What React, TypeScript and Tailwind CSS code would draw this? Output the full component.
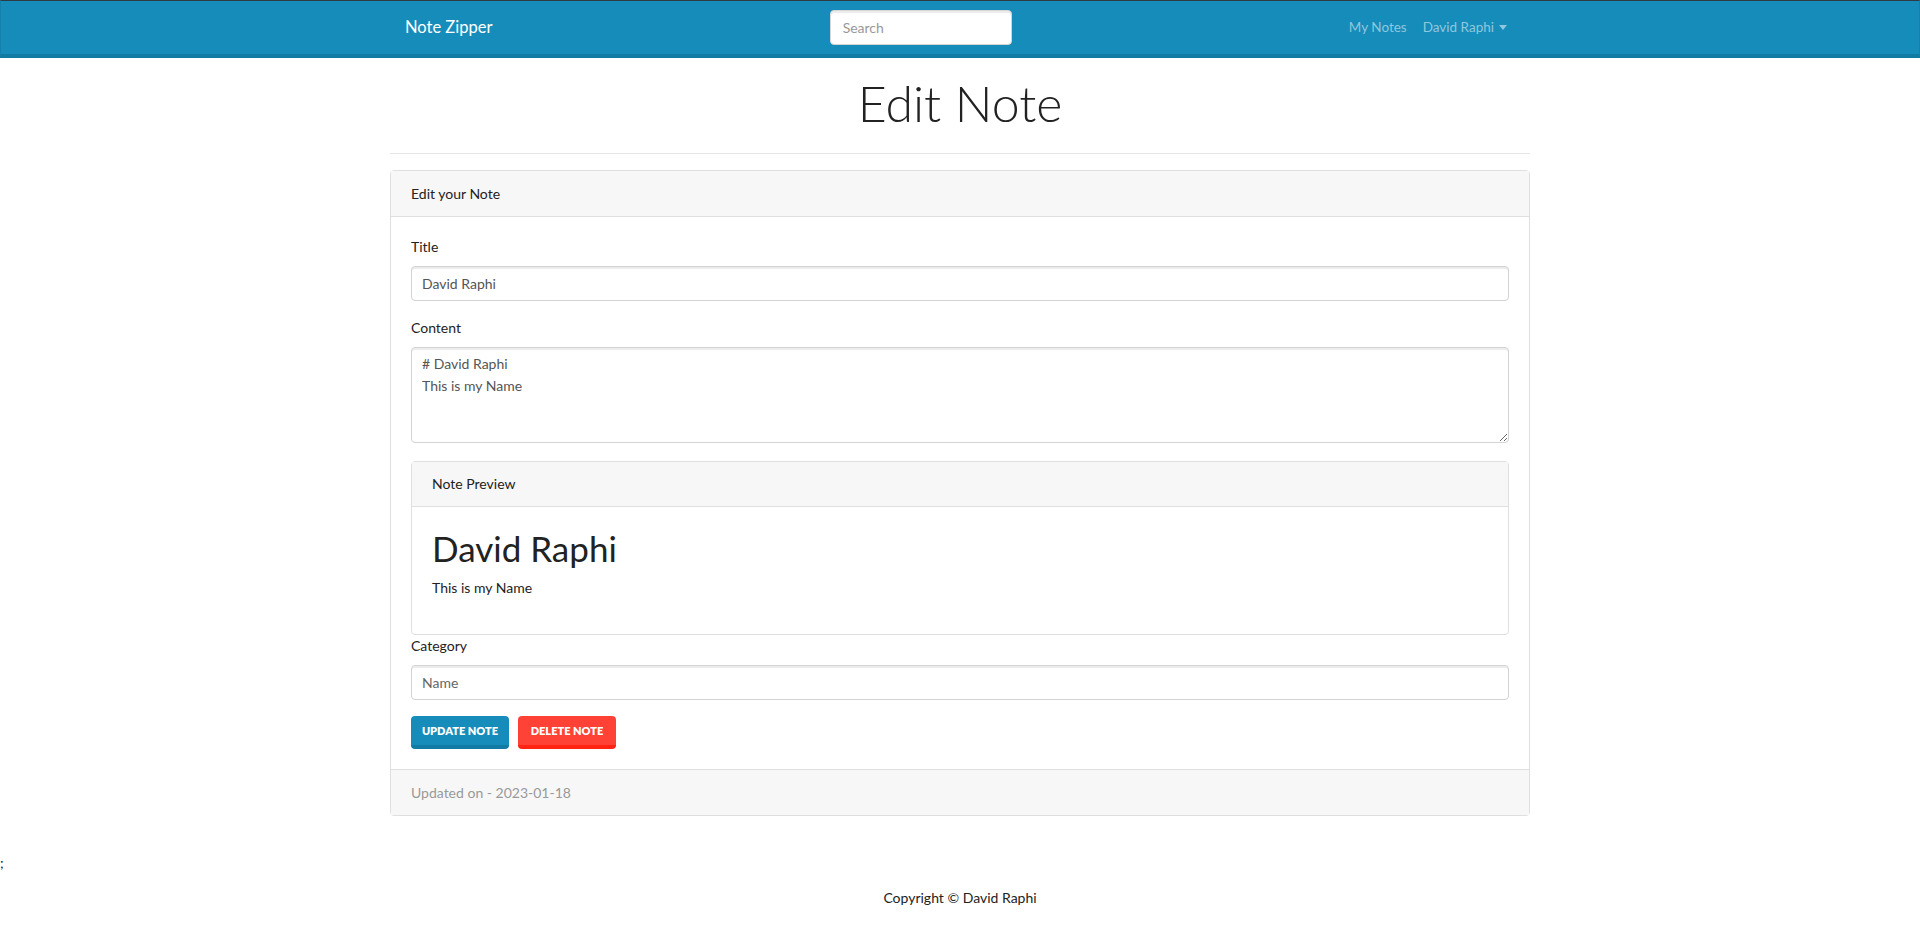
import React from "react";

const Header = () => {
  return (
    <nav className="h-[58px] border-t border-l border-r border-b-4 border-t-[#2f3a44] border-l-[#1581ab] border-r-[#1581ab] border-b-[#127ba3] bg-[#168cba]">
      <div className="mx-auto flex h-full w-[1140px] items-center px-[15px]">
        <a className="text-[16.5px] text-white" href="#">
          Note Zipper
        </a>
        <div className="flex flex-1 justify-center pl-[8px]">
          <input
            type="text"
            placeholder="Search"
            className="h-[35px] w-[182px] rounded-[4px] border border-[#d5d5d5] bg-white px-3 text-[14px] text-[#555] shadow-[inset_0_2px_0_rgba(0,0,0,0.075)] placeholder:text-[#999] focus:outline-none"
          />
        </div>
        <div className="flex items-center text-[13.5px] text-[#8fc7dd]">
          <a href="#" className="px-2">
            My Notes
          </a>
          <a href="#" className="flex items-center gap-[5px] px-2">
            David Raphi
            <span className="h-0 w-0 border-x-[4px] border-t-[5px] border-x-transparent border-t-[#8fc7dd]" />
          </a>
        </div>
      </div>
    </nav>
  );
};

const inputCls =
  "block h-[35px] w-full rounded-[4px] border border-[#d3d3d3] bg-white px-[10px] text-[14px] text-[#555] shadow-[inset_0_2px_0_rgba(0,0,0,0.075)] focus:outline-none";

const EditNote = () => {
  return (
    <div className="mx-auto w-[1140px]">
      <h1 className="mt-[14px] text-center text-[50px] font-light leading-[62px] text-[#222]">
        Edit Note
      </h1>
      <hr className="mt-[19px] border-t border-[#e6e6e6]" />

      <div className="mt-[16px] rounded-[4px] border border-[#dfdfdf]">
        <div className="h-[46px] border-b border-[#dfdfdf] bg-[#f7f7f7] px-5 py-3 leading-[21px]">
          Edit your Note
        </div>

        <div className="p-5 pt-[19px]">
          <div className="mb-4">
            <label className="mb-[9px] block leading-[21px]">Title</label>
            <input type="text" defaultValue="David Raphi" className={inputCls} />
          </div>

          <div className="mb-[18px]">
            <label className="mb-[9px] block leading-[21px]">Content</label>
            <textarea
              rows={4}
              defaultValue={"# David Raphi\nThis is my Name"}
              className="block h-[96px] w-full rounded-[4px] border border-[#d3d3d3] bg-white px-[10px] py-[5px] text-[14px] leading-[22px] text-[#555] shadow-[inset_0_2px_0_rgba(0,0,0,0.075)] focus:outline-none"
            />
          </div>

          <div className="rounded-[4px] border border-[#dfdfdf]">
            <div className="h-[45px] border-b border-[#dfdfdf] bg-[#f7f7f7] px-5 py-3 leading-[20px]">
              Note Preview
            </div>
            <div className="px-5 pt-5 pb-[20px]">
              <h1 className="mb-2 text-[35px] leading-[42px] text-[#222]">
                David Raphi
              </h1>
              <p className="mb-4 leading-[21px]">This is my Name</p>
            </div>
          </div>

          <div className="mb-4">
            <label className="mb-[9px] block leading-[21px]">Category</label>
            <input type="text" placeholder="Name" className={`${inputCls} placeholder:text-[#666]`} />
          </div>

          <div className="flex">
            <button className="h-[33px] w-[98px] rounded-[4px] border-b-4 border-[#127ba3] bg-[#168cba] pt-[2px] text-[11px] font-extrabold uppercase text-white">
              Update Note
            </button>
            <button className="ml-[9px] h-[33px] w-[98px] rounded-[4px] border-b-4 border-[#ff2414] bg-[#ff4136] pt-[2px] text-[11px] font-extrabold uppercase text-white">
              Delete Note
            </button>
          </div>
        </div>

        <div className="h-[46px] border-t border-[#dfdfdf] bg-[#f7f7f7] px-5 py-3 leading-[21px] text-[#999]">
          Updated on - 2023-01-18
        </div>
      </div>
    </div>
  );
};

export default function App() {
  return (
    <div className="min-h-[928px] bg-white font-['Lato',sans-serif] text-[14px] text-[#222]">
      <Header />
      <main>
        <EditNote />
      </main>
      <div className="mt-[36px] leading-[21px]">;</div>
      <footer className="pt-[14px] pb-4 text-center leading-[21px]">
        Copyright © David Raphi
      </footer>
    </div>
  );
}
